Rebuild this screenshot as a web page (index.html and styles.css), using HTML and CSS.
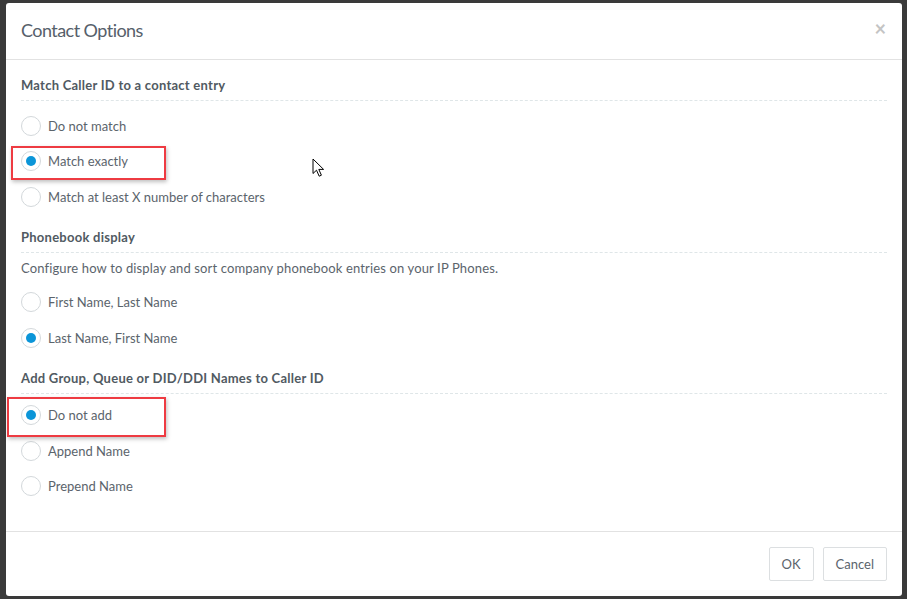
FILE: index.html
```html
<!DOCTYPE html>
<html>
<head>
<meta charset="utf-8">
<title>Contact Options</title>
<link rel="stylesheet" href="styles.css">
</head>
<body>
<div class="modal">
  <div class="modal-header">
    <h4 class="modal-title">Contact Options</h4>
    <span class="close">×</span>
  </div>
  <div class="modal-body">
    <div class="section">
      <div class="section-title">Match Caller ID to a contact entry</div>
      <div class="radios">
        <div class="radio"><span class="dot"></span><span class="label">Do not match</span></div>
        <div class="radio checked"><span class="dot"></span><span class="label">Match exactly</span></div>
        <div class="radio"><span class="dot"></span><span class="label">Match at least X number of characters</span></div>
      </div>
    </div>
    <div class="section">
      <div class="section-title">Phonebook display</div>
      <p class="desc">Configure how to display and sort company phonebook entries on your IP Phones.</p>
      <div class="radios">
        <div class="radio"><span class="dot"></span><span class="label">First Name, Last Name</span></div>
        <div class="radio checked"><span class="dot"></span><span class="label">Last Name, First Name</span></div>
      </div>
    </div>
    <div class="section">
      <div class="section-title">Add Group, Queue or DID/DDI Names to Caller ID</div>
      <div class="radios radios-tight">
        <div class="radio checked"><span class="dot"></span><span class="label">Do not add</span></div>
        <div class="radio"><span class="dot"></span><span class="label">Append Name</span></div>
        <div class="radio"><span class="dot"></span><span class="label">Prepend Name</span></div>
      </div>
    </div>
  </div>
  <div class="modal-footer">
    <button class="btn">OK</button>
    <button class="btn">Cancel</button>
  </div>
  <div class="highlight hl-1"></div>
  <div class="highlight hl-2"></div>
  <svg class="cursor" width="14" height="20" viewBox="0 0 14 20">
    <path d="M1 1 L1 15.5 L4.5 12.2 L7.2 18.2 L9.4 17.2 L6.8 11.4 L11.6 11.4 Z" fill="#fff" stroke="#000" stroke-width="1" stroke-linejoin="miter"/>
  </svg>
</div>
</body>
</html>
```
FILE: styles.css
```css
* { box-sizing: border-box; }
html, body { margin: 0; padding: 0; }
body {
  background: #3a3a3a;
  width: 907px;
  height: 599px;
  overflow: hidden;
  font-family: Lato, "Liberation Sans", sans-serif;
  font-size: 13px;
  color: #5b646c;
}
.modal {
  position: relative;
  margin: 3px 0 0 6px;
  width: 896px;
  height: 593px;
  background: #fff;
  border-radius: 3px;
  display: flex;
  flex-direction: column;
}
.modal-header {
  height: 57px;
  border-bottom: 1px solid #e2e2e2;
  display: flex;
  align-items: center;
  justify-content: space-between;
  padding: 0 15px 0 15px;
}
.modal-title {
  margin: 0;
  font-weight: 400;
  font-size: 18px;
  letter-spacing: -0.55px;
  color: #56606a;
  padding-bottom: 2px;
}
.close {
  font-size: 20px;
  font-weight: 700;
  color: #c4c4c4;
  line-height: 1;
  margin-top: -6px;
  margin-right: 1px;
}
.modal-body {
  flex: 1;
  padding: 15px 15px 0 15px;
}
.section-title {
  font-weight: 700;
  font-size: 13px;
  letter-spacing: 0.25px;
  line-height: 20px;
  color: #515a62;
  padding-bottom: 5px;
  border-bottom: 1px dashed #dfe6e8;
}
.section + .section { margin-top: 12px; }
.radios { margin-top: 7px; }
.radios-tight { margin-top: 4px; }
.desc {
  margin: 5px 0 7px 0;
  line-height: 20px;
  letter-spacing: 0.14px;
}
.desc + .radios { margin-top: 0; }
.radio {
  height: 35.5px;
  display: flex;
  align-items: center;
}
.dot {
  width: 20px;
  height: 20px;
  border: 1px solid #d3d8db;
  border-radius: 50%;
  display: flex;
  align-items: center;
  justify-content: center;
  margin-right: 7px;
  flex: none;
}
.checked .dot::after {
  content: "";
  width: 10px;
  height: 10px;
  border-radius: 50%;
  background: #0b95d8;
}
.label { line-height: 20px; }
.modal-footer {
  height: 65px;
  border-top: 1px solid #e2e2e2;
  display: flex;
  justify-content: flex-end;
  align-items: flex-start;
  gap: 9px;
  padding: 15px 15px 0 0;
}
.btn {
  height: 34px;
  padding: 0 12px;
  background: #fff;
  border: 1px solid #dcdfe1;
  border-radius: 2px;
  font-family: Lato, "Liberation Sans", sans-serif;
  font-size: 13px;
  color: #5b646c;
}
.highlight {
  position: absolute;
  border: 2px solid #ee3b42;
  box-shadow: 1px 2px 4px rgba(0,0,0,0.25);
}
.hl-1 { left: 5px; top: 143px; width: 155px; height: 34px; }
.hl-2 { left: 1px; top: 394px; width: 159px; height: 40px; }
.cursor { position: absolute; left: 306px; top: 155px; }
```
